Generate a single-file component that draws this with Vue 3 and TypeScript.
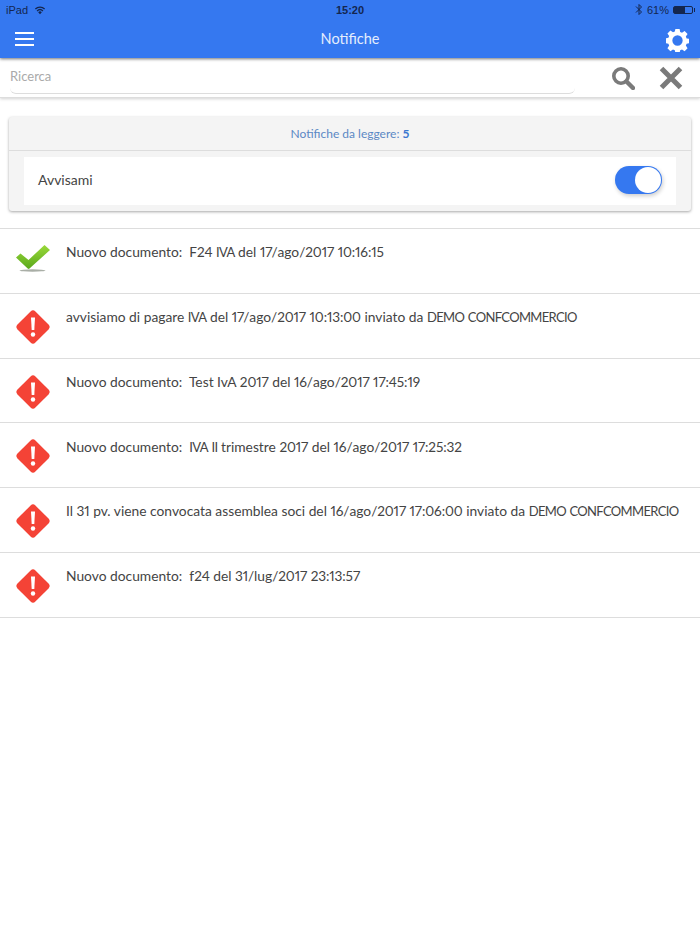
<script setup lang="ts">
interface Notifica {
  id: number;
  testo: string;
  letta: boolean;
}

const notifiche: Notifica[] = [
  { id: 1, testo: "Nuovo documento:  F24 IVA del 17/ago/2017 10:16:15", letta: true },
  { id: 2, testo: "avvisiamo di pagare IVA del 17/ago/2017 10:13:00 inviato da DEMO CONFCOMMERCIO", letta: false },
  { id: 3, testo: "Nuovo documento:  Test IvA 2017 del 16/ago/2017 17:45:19", letta: false },
  { id: 4, testo: "Nuovo documento:  IVA II trimestre 2017 del 16/ago/2017 17:25:32", letta: false },
  { id: 5, testo: "Il 31 pv. viene convocata assemblea soci del 16/ago/2017 17:06:00 inviato da DEMO CONFCOMMERCIO", letta: false },
  { id: 6, testo: "Nuovo documento:  f24 del 31/lug/2017 23:13:57", letta: false },
];

// Lato has wider capitals and digits than the font in the app, so those runs get tightened
const runs = (testo: string): string[] => testo.split(/([A-Z0-9:/]{2,})/);
const runClass = (run: string): string => (/\d/.test(run) ? "digits" : "caps");
</script>

<template>
  <div class="page">
    <header class="topbar">
      <div class="status">
        <div class="status-left">
          <span>iPad</span>
          <svg width="12" height="10" viewBox="0 0 14 11">
            <path d="M7 10.5 4.9 8a3 3 0 0 1 4.2 0z" fill="#14264f" />
            <path d="M3.6 6.6a5 5 0 0 1 6.8 0M1.6 4.3a8 8 0 0 1 10.8 0" fill="none" stroke="#14264f" stroke-width="1.6" />
          </svg>
        </div>
        <span class="status-time">15:20</span>
        <div class="status-right">
          <svg width="8" height="13" viewBox="0 0 8 13">
            <path d="M1 3.5 6.5 9 4 11.5v-10L6.5 4 1 9.5" fill="none" stroke="#14264f" stroke-width="1" />
          </svg>
          <span>61%</span>
          <div class="battery"><div class="battery-fill"></div></div>
        </div>
      </div>
      <div class="navbar">
        <div class="burger"><i></i><i></i><i></i></div>
        <span class="title">Notifiche</span>
        <svg class="gear" width="23" height="23" viewBox="0 0 24 24">
          <path fill="#fff" fill-rule="evenodd" d="M9.8 0h4.4l.6 3.1 1.9.8 2.7-1.8 3.1 3.1-1.8 2.7.8 1.9 3 .6v4.4l-3 .6-.8 1.9 1.8 2.7-3.1 3.1-2.7-1.8-1.9.8-.6 3H9.8l-.6-3-1.9-.8-2.7 1.8-3.1-3.1 1.8-2.7-.8-1.9-3-.6V9.8l3-.6.8-1.9-1.8-2.7 3.1-3.1 2.7 1.8 1.9-.8zM12 6.6a5.4 5.4 0 1 0 0 10.8 5.4 5.4 0 0 0 0-10.8z" />
        </svg>
      </div>
    </header>

    <div class="searchbar">
      <div class="search-field">Ricerca</div>
      <svg class="search-icon" width="24" height="24" viewBox="0 0 24 24">
        <circle cx="10" cy="10" r="7.2" fill="none" stroke="#7a7a7a" stroke-width="3.6" />
        <path d="m15.5 15.5 6.5 6.5" stroke="#7a7a7a" stroke-width="4.4" stroke-linecap="round" />
      </svg>
      <svg class="close-icon" width="24" height="24" viewBox="0 0 24 24">
        <path d="m2.5 2.5 19 19M21.5 2.5l-19 19" stroke="#7a7a7a" stroke-width="5" />
      </svg>
    </div>

    <section class="card">
      <div class="card-head">Notifiche da leggere: <b>5</b></div>
      <div class="card-body">
        <div class="toggle-row">
          <span>Avvisami</span>
          <div class="toggle"><div class="knob"></div></div>
        </div>
      </div>
    </section>

    <ul class="list">
      <li v-for="n in notifiche" :key="n.id" class="item">
        <div class="icon-slot">
          <svg v-if="n.letta" width="36" height="30" viewBox="0 0 36 30">
            <defs>
              <linearGradient id="verde" x1="0" y1="0" x2="0" y2="1">
                <stop offset="0" stop-color="#9ad93a" />
                <stop offset="1" stop-color="#5aa81c" />
              </linearGradient>
            </defs>
            <ellipse cx="17.5" cy="26.5" rx="13" ry="1.2" fill="#a9aea6" />
            <path d="M1 13.5 5.5 9.5l8 6.5L29.5 1 35 6 14.5 24.5c-.6.5-1.2.5-1.8 0z" fill="url(#verde)" />
          </svg>
          <svg v-else width="36" height="36" viewBox="0 0 36 36">
            <path d="M15.6 2.5a3.4 3.4 0 0 1 4.8 0l13.1 13.1a3.4 3.4 0 0 1 0 4.8L20.4 33.5a3.4 3.4 0 0 1-4.8 0L2.5 20.4a3.4 3.4 0 0 1 0-4.8z" fill="#f44336" />
            <path d="M16 8.5h4l-.7 12.5h-2.6z" fill="#fff" />
            <circle cx="18" cy="25.5" r="2.2" fill="#fff" />
          </svg>
        </div>
        <span class="text"><template v-for="(r, i) in runs(n.testo)" :key="i"><span v-if="i % 2" :class="runClass(r)">{{ r }}</span><template v-else>{{ r }}</template></template></span>
      </li>
    </ul>
  </div>
</template>

<style scoped>
.page {
  width: 700px;
  height: 934px;
  background: #fff;
  font-family: Lato, "Open Sans", sans-serif;
  color: #444;
  overflow: hidden;
}

.topbar {
  height: 58px;
  background: #3578f0;
  box-shadow: 0 1px 3px rgba(0, 0, 0, 0.55);
  position: relative;
}

.status {
  height: 19px;
  padding: 0 6px;
  display: grid;
  grid-template-columns: 1fr auto 1fr;
  align-items: center;
  color: #14264f;
  font: 11px "Liberation Sans", sans-serif;
}

.status-left {
  display: flex;
  align-items: center;
  gap: 6px;
}

.status-time {
  font-weight: bold;
}

.status-right {
  display: flex;
  align-items: center;
  justify-content: flex-end;
  gap: 4px;
}

.battery {
  width: 20px;
  height: 8px;
  border: 1px solid #14264f;
  border-radius: 2px;
  box-sizing: border-box;
  margin-right: 1px;
  position: relative;
}

.battery::after {
  content: "";
  position: absolute;
  right: -3px;
  top: 1px;
  width: 1.5px;
  height: 4px;
  background: #14264f;
}

.battery-fill {
  width: 61%;
  height: 100%;
  background: #14264f;
}

.navbar {
  height: 39px;
  display: flex;
  align-items: center;
  padding: 0 11px 0 15px;
}

.burger {
  display: flex;
  flex-direction: column;
  gap: 4px;
  width: 19px;
}

.burger i {
  display: block;
  height: 2px;
  background: #fff;
}

.title {
  flex: 1;
  text-align: center;
  color: #e4edfd;
  font-size: 14.5px;
}

.gear {
  margin-top: 3px;
}

.searchbar {
  height: 39px;
  display: flex;
  align-items: center;
  padding: 0 16px 0 10px;
  border-bottom: 1px solid #ddd;
  box-shadow: 0 1px 3px rgba(0, 0, 0, 0.18);
}

.search-field {
  width: 565px;
  height: 34px;
  margin-top: -1px;
  line-height: 32px;
  font-size: 13px;
  color: #aaa;
  border-bottom: 1px solid #ddd;
  border-radius: 0 0 6px 6px;
  box-sizing: border-box;
}

.search-icon {
  margin-left: 36px;
}

.close-icon {
  margin-left: 24px;
}

.card {
  margin: 19px 9px 17px;
  height: 94px;
  border-radius: 3px;
  background: #f4f4f4;
  box-shadow: 0 1px 3px rgba(0, 0, 0, 0.35);
  display: flex;
  flex-direction: column;
}

.card-head {
  height: 33px;
  line-height: 33px;
  text-align: center;
  font-size: 12px;
  color: #5b88c4;
  border-bottom: 1px solid #ddd;
}

.card-head b {
  color: #3a78d0;
}

.card-body {
  padding: 6px 15px;
}

.toggle-row {
  height: 48px;
  background: #fff;
  display: flex;
  align-items: center;
  justify-content: space-between;
  padding: 0 14px;
  font-size: 14px;
}

.toggle-row span {
  margin-top: -3px;
}

.toggle {
  width: 47px;
  height: 28px;
  margin-top: -2px;
  border-radius: 14px;
  background: #3578f0;
  box-shadow: 1px 2px 4px rgba(0, 0, 0, 0.2);
  position: relative;
}

.knob {
  position: absolute;
  right: 1px;
  top: 1px;
  width: 26px;
  height: 26px;
  border-radius: 50%;
  background: #fff;
}

.list {
  list-style: none;
  margin: 0;
  padding: 0;
  border-top: 1px solid #ddd;
}

.item {
  height: 63.8px;
  border-bottom: 1px solid #ddd;
  display: flex;
  align-items: flex-start;
  padding-left: 15px;
  font-size: 13.8px;
}

.icon-slot {
  width: 51px;
  flex: none;
  padding-top: 15px;
}

.icon-slot svg {
  display: block;
}

.text {
  padding-top: 14.3px;
  white-space: pre;
  line-height: 18px;
}

.digits {
  font-size: 13.6px;
  font-variant-numeric: proportional-nums;
  letter-spacing: -0.1px;
}

.caps {
  font-size: 13px;
  letter-spacing: -0.65px;
}
</style>

<style>
html,
body {
  background: #fff;
}
</style>
